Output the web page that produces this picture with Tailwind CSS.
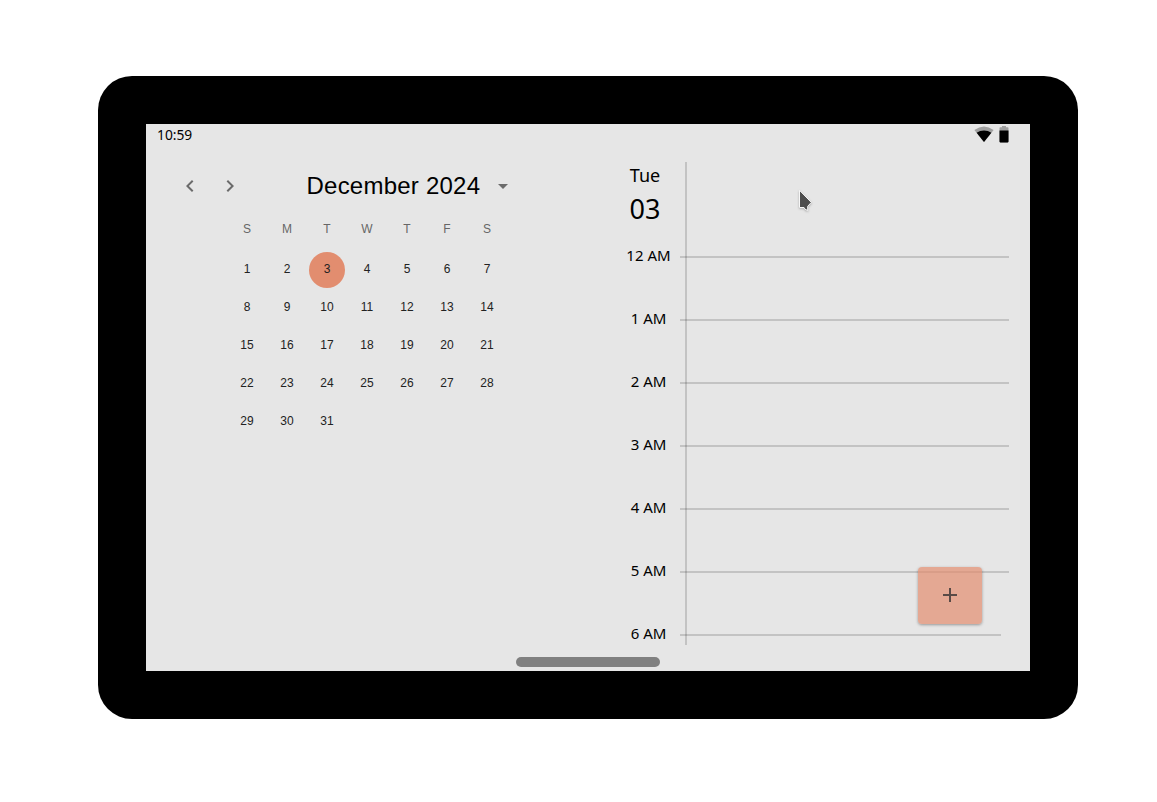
<!DOCTYPE html>
<html lang="en">
<head>
<meta charset="utf-8">
<title>Calendar</title>
<script src="https://cdn.jsdelivr.net/npm/@tailwindcss/browser@4"></script>
</head>
<body class="bg-white w-[1157px] h-[802px] overflow-hidden pt-[76px] pl-[98px]">
<div class="w-[980px] h-[643px] bg-black rounded-[34px] p-12">
  <div class="relative w-[884px] h-[547px] bg-[#e6e6e6] flex flex-col overflow-hidden text-black font-['Noto_Sans',sans-serif]">
    <header class="h-[22px] shrink-0 flex justify-between pl-[11px] pr-[21px]">
      <span class="text-[13.800px] leading-[22px]">10:59</span>
      <div class="flex gap-[5px]">
        <svg class="w-5 h-[22px]" viewBox="0 0 20 22"><path d="M10 18 .4 6.100Q5 2.600 10 2.600T19.600 6.100Z" fill="#a0a0a0"/><path d="M10 18 2.600 8.700Q6 6.400 10 6.400T17.400 8.700Z"/></svg>
        <svg class="w-[10px] h-[22px]" viewBox="0 0 10 22"><path d="M1.300 3.200H3V2H7V3.200H8.700Q9.500 3.200 9.500 4V17.700Q9.500 18.500 8.700 18.500H1.300Q.5 18.500 .5 17.700V4Q.5 3.200 1.300 3.200Z" fill="#a0a0a0"/><path d="M.5 6.500H9.500V17.600Q9.500 18.400 8.700 18.400H1.300Q.5 18.400 .5 17.600Z"/></svg>
      </div>
    </header>
    <main class="flex flex-1 min-h-0">
      <section class="w-[474px] shrink-0 pt-5 font-['Liberation_Sans',sans-serif]">
        <div class="flex items-center h-10 pl-6 text-[#6b6b6b]">
          <button class="w-10 h-10 flex items-center justify-center"><svg class="w-6 h-6" viewBox="0 0 24 24" fill="currentColor"><path d="M15.410 7.410 14 6l-6 6 6 6 1.410-1.410L10.830 12z"/></svg></button>
          <button class="w-10 h-10 flex items-center justify-center"><svg class="w-6 h-6" viewBox="0 0 24 24" fill="currentColor"><path d="M10 6 8.590 7.410 13.170 12l-4.580 4.590L10 18l6-6z"/></svg></button>
          <h1 class="ml-[56.500px] w-[174.500px] text-[24px] leading-10 text-black whitespace-nowrap tracking-[0.230px]">December 2024</h1>
          <svg class="ml-[10px] w-6 h-6" viewBox="0 0 24 24" fill="currentColor"><path d="m7 10 5 5 5-5z"/></svg>
        </div>
        <div class="ml-[81px] w-[280px] grid grid-cols-7 text-center text-[12px]">
          <div class="contents text-[#666] *:h-[44px] *:leading-[46px]"><span>S</span><span>M</span><span>T</span><span>W</span><span>T</span><span>F</span><span>S</span></div>
          <div id="days" class="contents text-[#222]"></div>
        </div>
      </section>
      <section class="w-[389px] pt-4">
        <div class="relative h-[483px]">
          <div class="absolute left-[65px] top-0 w-0.5 h-full bg-black/15"></div>
          <div class="w-[50px] text-center h-[79px]">
            <p class="text-[18px] leading-[26px]">Tue</p>
            <p class="text-[27px] leading-[41px]">03</p>
          </div>
          <div id="hours"></div>
        </div>
      </section>
    </main>
    <button class="absolute left-[772px] top-[443px] w-16 h-[57px] rounded-[4px] bg-[#e28d6f]/70 shadow-[0_1px_3px_rgba(0,0,0,0.35)] flex justify-center pt-4">
      <svg class="w-6 h-6" viewBox="0 0 24 24"><path d="M11 5h2v6h6v2h-6v6h-2v-6H5v-2h6z" fill="#594a46"/></svg>
    </button>
    <div class="absolute left-[370px] top-[533px] w-36 h-[10px] rounded-full bg-[#808080]"></div>
    <svg class="absolute left-[650px] top-[62px] w-[20px] h-[28px] drop-shadow-[0_1px_1px_rgba(0,0,0,0.25)]" viewBox="0 0 20 28"><path d="M3.500 4.300V21.500H8L9 23.200 11.700 24.500V20.300L15.300 16.400Z" fill="#4d4d4d" stroke="#f7f7f7" stroke-width="1"/></svg>
  </div>
</div>
<script>
  const days = document.getElementById('days');
  for (let d = 1; d <= 31; d++) {
    const cell = document.createElement('span');
    cell.className = 'h-[38px] flex justify-center';
    cell.innerHTML = d === 3
      ? '<b class="font-normal w-9 h-9 mt-0.5 rounded-full bg-[#e28d6f] leading-[34px]">3</b>'
      : '<b class="font-normal leading-[38px]">' + d + '</b>';
    days.append(cell);
  }
  document.getElementById('hours').innerHTML = ['12 AM', '1 AM', '2 AM', '3 AM', '4 AM', '5 AM', '6 AM'].map((h, i) =>
    '<div class="flex h-[63px]"><span class="w-[57px] h-[28px] text-center text-[15px] leading-[28px]">' + h +
    '</span><i class="ml-[3px] mt-[15px] h-0.5 bg-black/15 ' + (i === 6 ? 'w-[321px]' : 'w-[329px]') + '"></i></div>').join('');
</script>
</body>
</html>
